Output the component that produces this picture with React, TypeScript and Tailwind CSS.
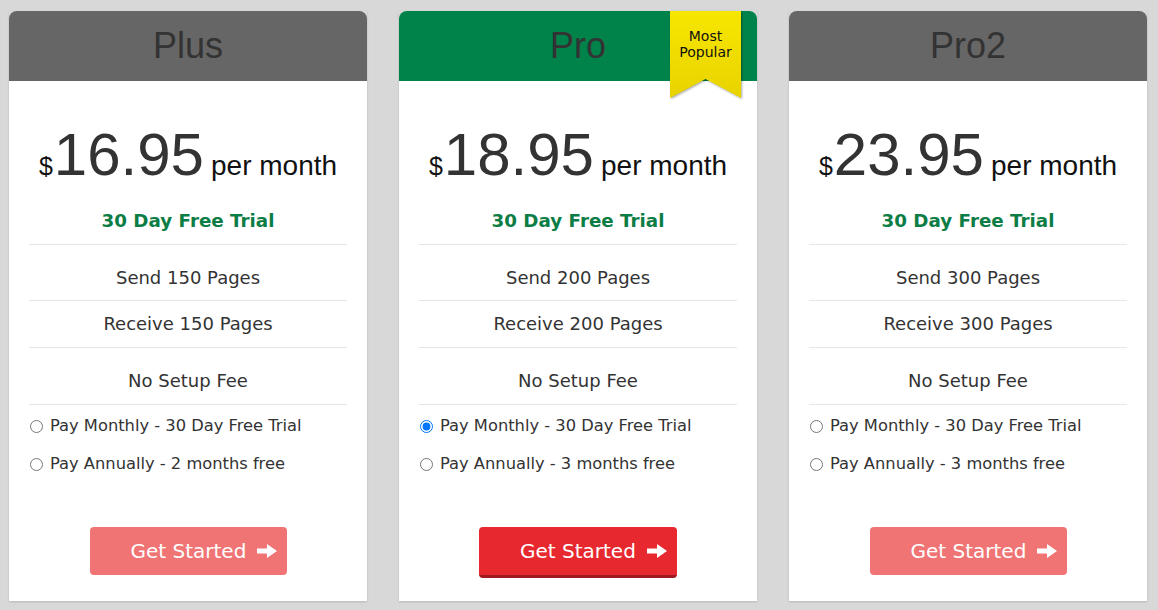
import React from "react";

type Plan = {
  name: string;
  price: string;
  send: string;
  receive: string;
  annual: string;
  popular?: boolean;
};

const plans: Plan[] = [
  { name: "Plus", price: "16.95", send: "Send 150 Pages", receive: "Receive 150 Pages", annual: "Pay Annually - 2 months free" },
  { name: "Pro", price: "18.95", send: "Send 200 Pages", receive: "Receive 200 Pages", annual: "Pay Annually - 3 months free", popular: true },
  { name: "Pro2", price: "23.95", send: "Send 300 Pages", receive: "Receive 300 Pages", annual: "Pay Annually - 3 months free" },
];

function Arrow() {
  return (
    <svg width="20" height="14" viewBox="0 0 20 14" className="shrink-0">
      <path d="M0 4.5 H10 V0 L20 7 L10 14 V9.5 H0 Z" fill="#fff" />
    </svg>
  );
}

function Ribbon() {
  return (
    <div className="absolute left-[271px] top-0 w-[71px] h-[90px]">
      <svg width="73" height="90" viewBox="0 0 73 90" className="absolute left-0 top-0" style={{ filter: "drop-shadow(1px 1px 1px rgba(0,0,0,0.35))" }}>
        <defs>
          <linearGradient id="rib" x1="0" y1="0" x2="0" y2="1">
            <stop offset="0" stopColor="#f7e600" />
            <stop offset="1" stopColor="#e9d300" />
          </linearGradient>
        </defs>
        <polygon points="0,0 71,0 71,87 35.5,68 0,87" fill="url(#rib)" />
      </svg>
      <div className="relative pt-[17px] text-center text-[14px] leading-[16px] text-[#111]" style={{ fontFamily: '"DejaVu Sans", Verdana, sans-serif' }}>
        <div>Most</div>
        <div>Popular</div>
      </div>
    </div>
  );
}

function Card({ plan }: { plan: Plan }) {
  const pro = !!plan.popular;
  return (
    <div className="relative w-[358px] h-[590px] flex flex-col shadow-[0_1px_2px_rgba(0,0,0,0.15)]">
      <div
        className={`h-[70px] rounded-t-[8px] flex items-center justify-center text-[36px] text-[#333] ${pro ? "bg-[#00834a]" : "bg-[#666666]"}`}
        style={{ fontFamily: '"Liberation Sans", Arial, sans-serif' }}
      >
        {plan.name}
      </div>
      {pro && <Ribbon />}
      <div className="flex-1 bg-white flex flex-col px-[20px]" style={{ fontFamily: '"DejaVu Sans", Verdana, sans-serif' }}>
        <div
          className="pt-[44px] flex justify-center items-baseline leading-none"
          style={{ fontFamily: '"Liberation Sans", Arial, sans-serif' }}
        >
          <span className="text-[25px] text-[#111] mr-[1px]">$</span>
          <span className="text-[60px] text-[#333]">{plan.price}</span>
          <span className="text-[28px] text-[#111] ml-[7px]">per month</span>
        </div>
        <div className="mt-[24px] pb-[11px] text-center text-[18.3px] leading-[24px] font-bold text-[#0b7d45] border-b border-[#e6e6e6]">
          30 Day Free Trial
        </div>
        <div className="pt-[21px] pb-[10px] text-center text-[18px] leading-[24px] text-[#333] border-b border-[#e6e6e6]">
          {plan.send}
        </div>
        <div className="pt-[11px] pb-[11px] text-center text-[18px] leading-[24px] text-[#333] border-b border-[#e6e6e6]">
          {plan.receive}
        </div>
        <div className="pt-[21px] pb-[11px] text-center text-[18px] leading-[24px] text-[#333] border-b border-[#e6e6e6]">
          No Setup Fee
        </div>
        <div className="pt-[9px] flex flex-col gap-[14px] text-[16.3px] leading-[24px] text-[#333]">
          <label className="flex items-center gap-[7px]">
            <input type="radio" name={`pay-${plan.name}`} defaultChecked={pro} className="m-0 ml-[1px] w-[13px] h-[13px]" />
            <span>Pay Monthly - 30 Day Free Trial</span>
          </label>
          <label className="flex items-center gap-[7px]">
            <input type="radio" name={`pay-${plan.name}`} className="m-0 ml-[1px] w-[13px] h-[13px]" />
            <span>{plan.annual}</span>
          </label>
        </div>
        <div className={`mt-auto flex justify-center ${pro ? "mb-[23px]" : "mb-[26px]"}`}>
          {pro ? (
            <button className="w-[198px] h-[51px] rounded-[4px] bg-[#e8282f] border-b-[3px] border-[#9e1a20] flex items-center pl-[41px] gap-[11px] text-white text-[20px] whitespace-nowrap">
              <span>Get Started</span>
              <Arrow />
            </button>
          ) : (
            <button className="w-[197px] h-[48px] rounded-[4px] bg-[#f07474] flex items-center pl-[41px] gap-[11px] text-white text-[20px] whitespace-nowrap">
              <span>Get Started</span>
              <Arrow />
            </button>
          )}
        </div>
      </div>
    </div>
  );
}

export default function App() {
  return (
    <div className="w-[1158px] h-[610px] bg-[#d8d8d8] flex pl-[9px] pt-[11px] gap-[32px] overflow-hidden">
      {plans.map((p) => (
        <Card key={p.name} plan={p} />
      ))}
    </div>
  );
}
